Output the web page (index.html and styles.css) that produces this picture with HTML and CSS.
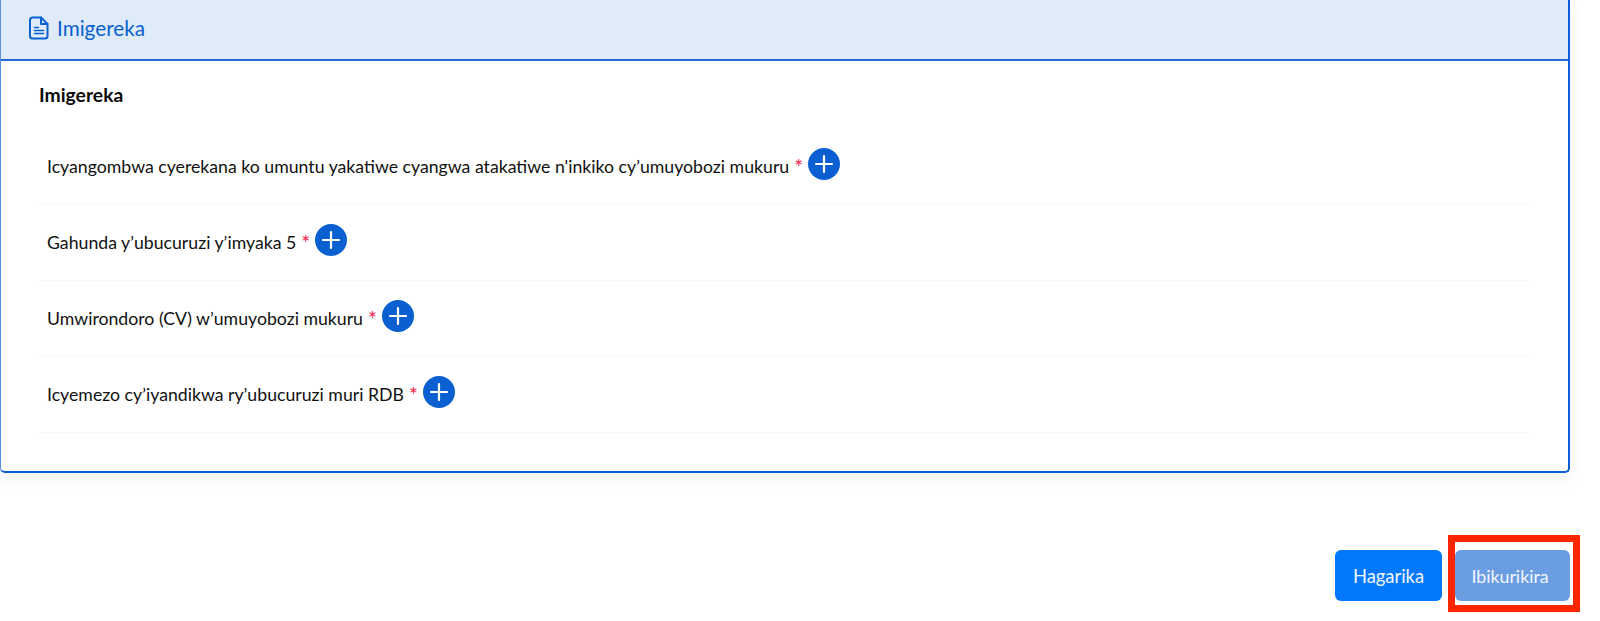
FILE: index.html
```html
<!DOCTYPE html>
<html lang="rw">
<head>
<meta charset="utf-8">
<title>Imigereka</title>
<link rel="stylesheet" href="styles.css">
</head>
<body>
<main class="page">
  <section class="card">
    <header class="card-head">
      <svg class="doc-icon" viewBox="0 0 20 24" width="20" height="24" fill="none" stroke="#0a60d0" stroke-width="2" stroke-linecap="round" stroke-linejoin="round">
        <path d="M3.500 1.500h8.500l6.500 6.500v12a2.500 2.500 0 0 1-2.500 2.500h-12.500a2.500 2.500 0 0 1-2.500-2.500v-16a2.500 2.500 0 0 1 2.500-2.500z"/>
        <path d="M12 1.500v6.500h6.500"/>
        <path d="M5.500 11.500h4M5.500 14.500h9M5.500 17.500h9" stroke-width="1.600"/>
      </svg>
      <span class="head-title">Imigereka</span>
    </header>
    <div class="card-body">
      <h2 class="section-title">Imigereka</h2>
      <ul class="doc-list">
        <li class="doc-row">
          <span class="doc-label">Icyangombwa cyerekana ko umuntu yakatiwe cyangwa atakatiwe n'inkiko cy’umuyobozi mukuru</span>
          <span class="req">*</span>
          <button class="add" type="button" aria-label="Add"><svg viewBox="0 0 32 32" width="32" height="32"><path d="M16 8v16M8 16h16" stroke="#fff" stroke-width="2.200" stroke-linecap="round"/></svg></button>
        </li>
        <li class="doc-row">
          <span class="doc-label">Gahunda y’ubucuruzi y’imyaka 5</span>
          <span class="req">*</span>
          <button class="add" type="button" aria-label="Add"><svg viewBox="0 0 32 32" width="32" height="32"><path d="M16 8v16M8 16h16" stroke="#fff" stroke-width="2.200" stroke-linecap="round"/></svg></button>
        </li>
        <li class="doc-row">
          <span class="doc-label">Umwirondoro (CV) w’umuyobozi mukuru</span>
          <span class="req">*</span>
          <button class="add" type="button" aria-label="Add"><svg viewBox="0 0 32 32" width="32" height="32"><path d="M16 8v16M8 16h16" stroke="#fff" stroke-width="2.200" stroke-linecap="round"/></svg></button>
        </li>
        <li class="doc-row">
          <span class="doc-label">Icyemezo cy’iyandikwa ry’ubucuruzi muri RDB</span>
          <span class="req">*</span>
          <button class="add" type="button" aria-label="Add"><svg viewBox="0 0 32 32" width="32" height="32"><path d="M16 8v16M8 16h16" stroke="#fff" stroke-width="2.200" stroke-linecap="round"/></svg></button>
        </li>
      </ul>
    </div>
  </section>
  <footer class="actions">
    <button class="btn btn-cancel" type="button">Hagarika</button>
    <button class="btn btn-next" type="button">Ibikurikira<span class="highlight"></span></button>
  </footer>
</main>
</body>
</html>
```

FILE: styles.css
```css
* { box-sizing: border-box; }
html, body { margin: 0; padding: 0; height: 621px; overflow: hidden; background: #fff; }
body { font-family: "Lato", "Noto Sans", sans-serif; color: #111; }
.page { width: 1600px; }
.card {
  width: 1570px;
  height: 473px;
  border: 2px solid #0a5fd6;
  border-left: 1px solid #5b90e4;
  border-top: 0;
  border-radius: 0 0 5px 5px;
  box-shadow: 0 6px 18px rgba(0, 0, 0, 0.06);
  background: #fff;
}
.card-head {
  height: 61px;
  display: flex;
  align-items: center;
  gap: 8px;
  padding: 0 0 4px 28px;
  background: #dfebf8;
  border-bottom: 2px solid #2468d8;
}
.doc-icon { flex: none; }
.head-title { font-size: 20.700px; color: #0a60d0; }
.card-body { padding: 0 39px 0 38px; }
.section-title { margin: 0; padding-top: 23px; font-size: 19.300px; line-height: 22px; font-weight: 700; color: #0b0b0b; }
.doc-list { list-style: none; margin: 23px 0 0; padding: 0; }
.doc-row {
  height: 76px;
  display: flex;
  align-items: center;
  padding: 0 8px;
  border-bottom: 1px solid #f7f7f7;
  font-size: 17.700px;
}
.doc-label { color: #111; }
.req { color: #f5234f; margin-left: 5px; font-size: 21px; line-height: 1; }
.add {
  width: 32px;
  height: 32px;
  margin: -6px 0 0 5px;
  padding: 0;
  border: 0;
  border-radius: 50%;
  background: #0a60d0;
  display: block;
}
.add svg { display: block; }
.actions { display: flex; justify-content: flex-end; gap: 13px; margin-top: 77px; padding-right: 30px; }
.btn {
  height: 51px;
  border: 0;
  border-radius: 6px;
  color: #f2f6fd;
  font-family: inherit;
  font-size: 18.400px;
  position: relative;
}
.btn-cancel { width: 107px; background: #0279fd; }
.btn-next { width: 115px; padding: 0 5px 0 0; background: #6a9de2; font-size: 17.800px; }
.highlight {
  position: absolute;
  left: -7px;
  top: -15px;
  width: 132px;
  height: 77px;
  border: 7px solid #fb2500;
}
```
